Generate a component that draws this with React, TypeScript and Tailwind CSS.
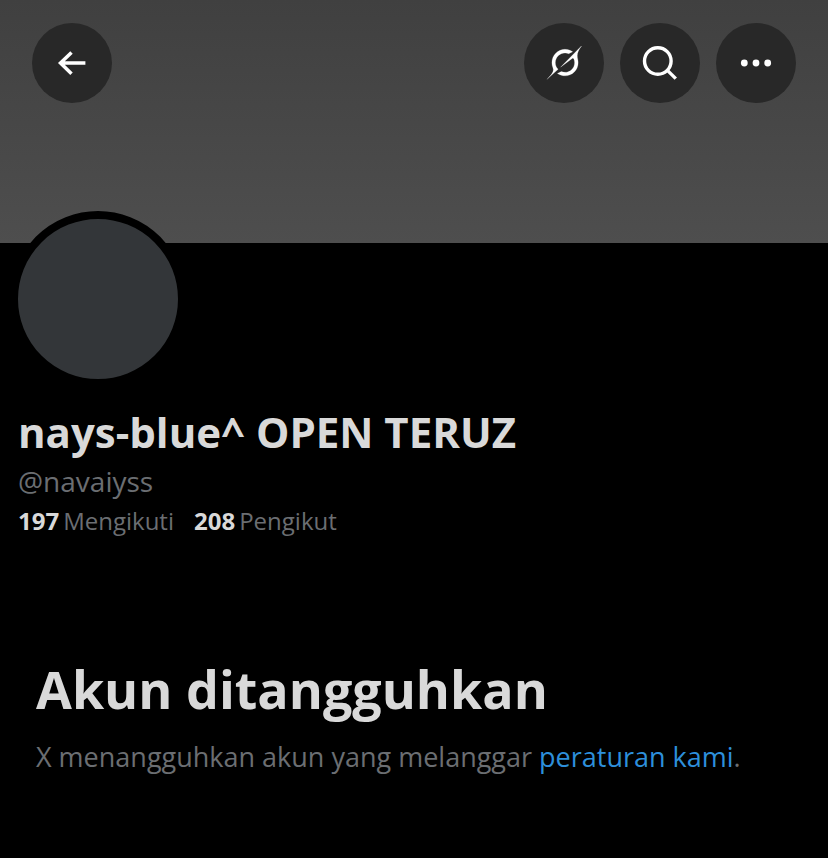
import type { ReactNode } from 'react';

function RoundButton({ label, children }: { label: string; children: ReactNode }) {
  return (
    <button
      type="button"
      aria-label={label}
      className="flex size-20 items-center justify-center rounded-full bg-[#282828] text-white"
    >
      {children}
    </button>
  );
}

export default function App() {
  return (
    <div className="min-h-screen bg-black font-['Open_Sans',sans-serif] text-[#d9d9d9]">
      {/* Banner */}
      <header className="flex h-[243px] items-start justify-between bg-linear-to-b from-[#404040] to-[#4e4e4e] px-8 pt-[23px]">
        <RoundButton label="Kembali">
          <svg className="size-10" viewBox="0 0 40 40" fill="none" stroke="currentColor" strokeWidth="3.5">
            <path d="M19.5 9.4L8.5 20l11 10.7M8.8 20h24.6" />
          </svg>
        </RoundButton>

        <div className="flex gap-4">
          <RoundButton label="Grok">
            <svg className="h-[34px] w-9" viewBox="-0.5 0.6 33 32" fill="currentColor" stroke="currentColor" strokeWidth="0.2">
              <path d="M12.745 20.54l10.97-8.19c.539-.4 1.307-.244 1.564.38 1.349 3.288.746 7.241-1.938 9.955-2.683 2.714-6.417 3.31-9.83 1.954l-3.728 1.745c5.347 3.697 11.84 2.782 15.898-1.324 3.219-3.255 4.216-7.692 3.284-11.693l.008.009c-1.351-5.878.332-8.227 3.782-13.031L33 0l-4.54 4.59v-.014L12.743 20.544m-2.263 1.987c-3.837-3.707-3.175-9.446.1-12.755 2.42-2.449 6.388-3.448 9.852-1.979l3.72-1.737c-.67-.49-1.53-1.017-2.515-1.387-4.455-1.854-9.789-.931-13.41 2.728-3.483 3.523-4.579 8.94-2.697 13.561 1.405 3.454-.899 5.898-3.22 8.364C1.49 30.2.666 31.074 0 32l10.478-9.466" className="[transform-box:view-box]" />
            </svg>
          </RoundButton>
          <RoundButton label="Cari">
            <svg className="size-10" viewBox="0 0 40 40" fill="none" stroke="currentColor" strokeWidth="3.4">
              <circle cx="17.8" cy="18" r="13.3" />
              <path d="M27.4 27.4L35.8 35.6" />
            </svg>
          </RoundButton>
          <RoundButton label="Lainnya">
            <svg className="size-10" viewBox="0 0 40 40" fill="currentColor">
              <circle cx="8.3" cy="20" r="3.4" />
              <circle cx="20" cy="20" r="3.4" />
              <circle cx="31.7" cy="20" r="3.4" />
            </svg>
          </RoundButton>
        </div>
      </header>

      {/* Profile */}
      <section className="px-[18px]">
        <div className="-mt-8 -ml-2 size-44 rounded-full border-8 border-black bg-[#333639]" />
        <h1 className="mt-4 text-[42px] leading-[58px] font-bold">nays-blue^ OPEN TERUZ</h1>
        <p className="text-[28px] leading-10 text-[#6b6e72]">@navaiyss</p>
        <div className="flex gap-5 text-2xl leading-10 text-[#6b6e72]">
          <a href="#following" className="flex gap-1">
            <span className="font-bold text-[#d9d9d9]">197</span>
            <span>Mengikuti</span>
          </a>
          <a href="#followers" className="flex gap-1">
            <span className="font-bold text-[#d9d9d9]">208</span>
            <span>Pengikut</span>
          </a>
        </div>
      </section>

      {/* Suspended notice */}
      <section className="px-9 pt-28 pb-12">
        <h2 className="text-[52px] leading-[72px] font-bold">Akun ditangguhkan</h2>
        <p className="mt-3 text-[27px] leading-10 text-[#6b6e72]">
          X menangguhkan akun yang melanggar{' '}
          <a href="#rules" className="text-[#2d8fdb]">
            peraturan kami
          </a>
          .
        </p>
      </section>
    </div>
  );
}
